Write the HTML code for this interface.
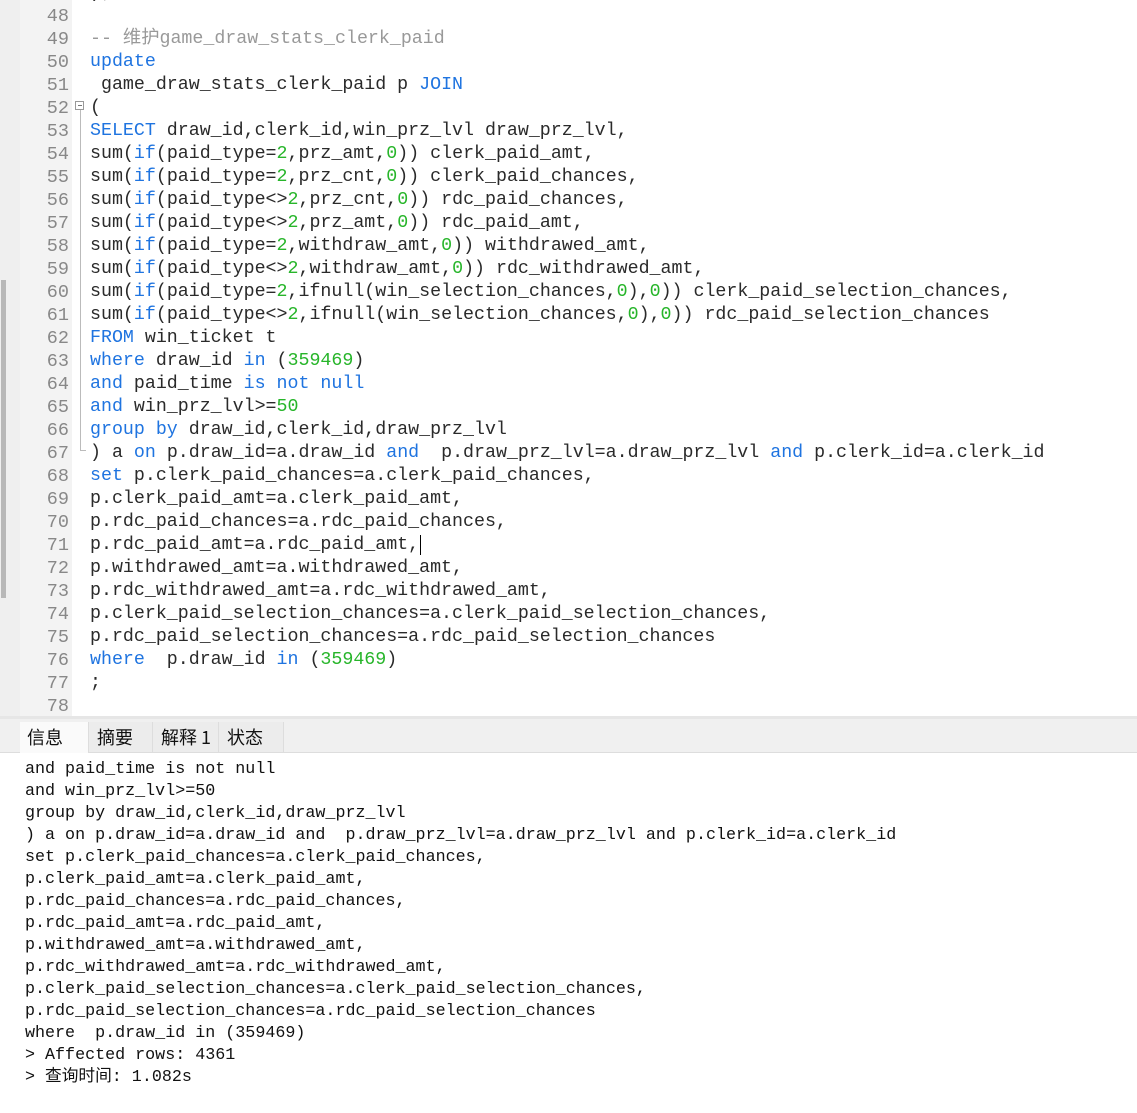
<!DOCTYPE html>
<html><head><meta charset="utf-8"><style>
body{margin:0;width:1137px;height:1113px;background:#fff;position:relative;overflow:hidden;font-family:"Liberation Mono","Noto Sans CJK SC",monospace;}
#lb{position:absolute;left:0;top:0;width:20px;height:716px;background:#efefef}
#thumb{position:absolute;left:1px;top:280px;width:5px;height:318px;background:#b8b8b8}
#gut{position:absolute;left:20px;top:0;width:52px;height:716px;background:#f3f3f3}
.ln{position:absolute;left:20px;width:49px;text-align:right;color:#888;font-size:18.5px;height:23px;line-height:23px}
.cl{position:absolute;left:90px;color:#2a2a2a;font-size:18.3px;height:23px;line-height:23px;white-space:pre}
.k{color:#1f74e0}.n{color:#27b52a}.c{color:#999}
#sep{position:absolute;left:0;top:716px;width:1137px;height:3px;background:#e6e6e6}
#tabs{position:absolute;left:0;top:719px;width:1137px;height:33px;background:#f0f0f0;border-bottom:1px solid #ddd}
.tab{position:absolute;top:3px;height:30px;line-height:30px;font-family:"Noto Sans CJK SC",sans-serif;font-size:18px;color:#111;padding-left:8px;box-sizing:border-box;border-right:1px solid #ddd}
.ol{position:absolute;left:25px;font-size:16.7px;color:#111;white-space:pre;height:22px;line-height:22px}
</style></head><body>
<div id="lb"></div><div id="thumb"></div><div id="gut"></div>
<div style="position:absolute;left:75px;top:101px;width:9px;height:9px;border:1px solid #999;box-sizing:border-box"></div>
<div style="position:absolute;left:78px;top:105px;width:4px;height:1px;background:#777"></div>
<div style="position:absolute;left:80px;top:110px;width:1px;height:340px;background:#bbb"></div>
<div style="position:absolute;left:80px;top:450px;width:6px;height:1px;background:#bbb"></div>
<div id="lines"></div>
<div id="sep"></div>
<div id="tabs">
<div class="tab" style="left:20px;width:69px;background:#fafafa;height:31px;padding-left:7px">信息</div>
<div class="tab" style="left:89px;width:64px;background:#ececec">摘要</div>
<div class="tab" style="left:153px;width:66px;background:#ececec">解释 1</div>
<div class="tab" style="left:219px;width:65px;background:#ececec">状态</div>
</div>
<script>
var L=[
'',
'<span class="c">-- 维护game_draw_stats_clerk_paid</span>',
'<span class="k">update</span>',
' game_draw_stats_clerk_paid p <span class="k">JOIN</span>',
'(',
'<span class="k">SELECT</span> draw_id,clerk_id,win_prz_lvl draw_prz_lvl,',
'sum(<span class="k">if</span>(paid_type=<span class="n">2</span>,prz_amt,<span class="n">0</span>)) clerk_paid_amt,',
'sum(<span class="k">if</span>(paid_type=<span class="n">2</span>,prz_cnt,<span class="n">0</span>)) clerk_paid_chances,',
'sum(<span class="k">if</span>(paid_type&lt;&gt;<span class="n">2</span>,prz_cnt,<span class="n">0</span>)) rdc_paid_chances,',
'sum(<span class="k">if</span>(paid_type&lt;&gt;<span class="n">2</span>,prz_amt,<span class="n">0</span>)) rdc_paid_amt,',
'sum(<span class="k">if</span>(paid_type=<span class="n">2</span>,withdraw_amt,<span class="n">0</span>)) withdrawed_amt,',
'sum(<span class="k">if</span>(paid_type&lt;&gt;<span class="n">2</span>,withdraw_amt,<span class="n">0</span>)) rdc_withdrawed_amt,',
'sum(<span class="k">if</span>(paid_type=<span class="n">2</span>,ifnull(win_selection_chances,<span class="n">0</span>),<span class="n">0</span>)) clerk_paid_selection_chances,',
'sum(<span class="k">if</span>(paid_type&lt;&gt;<span class="n">2</span>,ifnull(win_selection_chances,<span class="n">0</span>),<span class="n">0</span>)) rdc_paid_selection_chances',
'<span class="k">FROM</span> win_ticket t',
'<span class="k">where</span> draw_id <span class="k">in</span> (<span class="n">359469</span>)',
'<span class="k">and</span> paid_time <span class="k">is not null</span>',
'<span class="k">and</span> win_prz_lvl&gt;=<span class="n">50</span>',
'<span class="k">group by</span> draw_id,clerk_id,draw_prz_lvl',
') a <span class="k">on</span> p.draw_id=a.draw_id <span class="k">and</span>  p.draw_prz_lvl=a.draw_prz_lvl <span class="k">and</span> p.clerk_id=a.clerk_id',
'<span class="k">set</span> p.clerk_paid_chances=a.clerk_paid_chances,',
'p.clerk_paid_amt=a.clerk_paid_amt,',
'p.rdc_paid_chances=a.rdc_paid_chances,',
'p.rdc_paid_amt=a.rdc_paid_amt,<span style="border-left:1px solid #000;margin-left:1px"></span>',
'p.withdrawed_amt=a.withdrawed_amt,',
'p.rdc_withdrawed_amt=a.rdc_withdrawed_amt,',
'p.clerk_paid_selection_chances=a.clerk_paid_selection_chances,',
'p.rdc_paid_selection_chances=a.rdc_paid_selection_chances',
'<span class="k">where</span>  p.draw_id <span class="k">in</span> (<span class="n">359469</span>)',
';',
''];
var h='<div class="cl" style="top:-18px">);</div>';
for(var i=0;i<L.length;i++){var t=5+i*23;h+='<div class="ln" style="top:'+t+'px">'+(48+i)+'</div><div class="cl" style="top:'+t+'px">'+L[i]+'</div>';}
var O=['and paid_time is not null','and win_prz_lvl>=50','group by draw_id,clerk_id,draw_prz_lvl',') a on p.draw_id=a.draw_id and  p.draw_prz_lvl=a.draw_prz_lvl and p.clerk_id=a.clerk_id','set p.clerk_paid_chances=a.clerk_paid_chances,','p.clerk_paid_amt=a.clerk_paid_amt,','p.rdc_paid_chances=a.rdc_paid_chances,','p.rdc_paid_amt=a.rdc_paid_amt,','p.withdrawed_amt=a.withdrawed_amt,','p.rdc_withdrawed_amt=a.rdc_withdrawed_amt,','p.clerk_paid_selection_chances=a.clerk_paid_selection_chances,','p.rdc_paid_selection_chances=a.rdc_paid_selection_chances','where  p.draw_id in (359469)','> Affected rows: 4361','> 查询时间: 1.082s'];
for(var j=0;j<O.length;j++){var d=document.createElement('div');d.className='ol';d.style.top=(759+j*22)+'px';d.textContent=O[j];h+=d.outerHTML;}
document.getElementById('lines').innerHTML=h;
</script>
</body></html>
